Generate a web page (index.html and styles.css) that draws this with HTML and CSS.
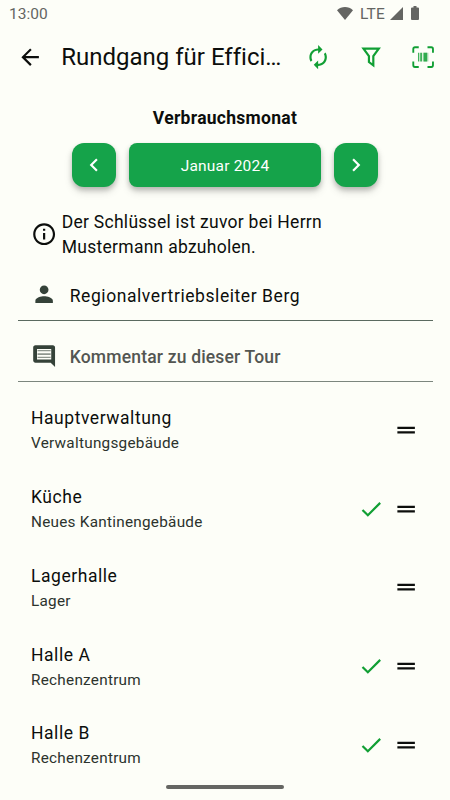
FILE: index.html
```html
<!DOCTYPE html>
<html lang="de">
  <head>
    <meta charset="UTF-8" />
    <meta name="viewport" content="width=device-width, initial-scale=1.0" />
    <title>Rundgang</title>
    <link rel="stylesheet" href="styles.css">
  </head>
  <body>
    <div class="screen">
      <div class="statusbar">
        <span class="statusbar__time">13:00</span>
        <svg class="statusbar__wifi" viewBox="0 0 16 13"><path d="M8 13 0 3.2C4.500-1 11.500-1 16 3.200z" /></svg>
        <span class="statusbar__net">LTE</span>
        <svg class="statusbar__signal" viewBox="0 0 13 13"><path d="M13 0v13H0z" /></svg>
        <svg class="statusbar__battery" viewBox="0 0 8 14"><path d="M2.500 0h3v1.500H7a1 1 0 0 1 1 1V13a1 1 0 0 1-1 1H1a1 1 0 0 1-1-1V2.500a1 1 0 0 1 1-1h1.500z" /></svg>
      </div>

      <header class="appbar">
        <svg class="icon" viewBox="0 0 24 24"><path d="M20 11H7.830l5.590-5.590L12 4l-8 8 8 8 1.410-1.410L7.830 13H20z" /></svg>
        <h1 class="appbar__title">Rundgang für Effici…</h1>
        <div class="appbar__actions">
          <svg class="icon" viewBox="0 0 24 24"><path d="M12 6v3l4-4-4-4v3c-4.420 0-8 3.580-8 8 0 1.570.46 3.030 1.240 4.260L6.700 14.800A5.870 5.870 0 0 1 6 12c0-3.310 2.690-6 6-6zm6.760 1.740L17.300 9.200c.44.840.7 1.790.7 2.800 0 3.310-2.690 6-6 6v-3l-4 4 4 4v-3c4.420 0 8-3.580 8-8 0-1.570-.46-3.030-1.240-4.260z" /></svg>
          <svg class="icon" viewBox="0 0 24 24"><path d="M5 4.200h14L14 11v8.500L10 16.500V11z" fill="none" stroke="currentColor" stroke-width="2" /></svg>
          <svg class="icon" viewBox="0 0 24 24">
            <path d="M3 8V4.500A1.500 1.500 0 0 1 4.500 3H8M16 3h3.500A1.500 1.500 0 0 1 21 4.500V8M21 16v3.500a1.500 1.500 0 0 1-1.500 1.500H16M8 21H4.500A1.500 1.500 0 0 1 3 19.500V16" fill="none" stroke="currentColor" stroke-width="1.700" />
            <path d="M7.300 8h1.200v8H7.300zM9.300 8h1.700v8H9.300zM12.500 8h1.900v8h-1.900zM14.400 8h1.200v8h-1.200z" opacity=".8" />
            <path d="M11.600 8h5.200v8h-5.200z" opacity=".35" />
          </svg>
        </div>
      </header>

      <section class="month">
        <h2 class="month__label">Verbrauchsmonat</h2>
        <div class="month__controls">
          <button class="month__step" aria-label="Zurück"><svg viewBox="0 0 24 24"><path d="M15.410 7.410 14 6l-6 6 6 6 1.410-1.410L10.830 12z" /></svg></button>
          <button class="month__current">Januar 2024</button>
          <button class="month__step" aria-label="Weiter"><svg viewBox="0 0 24 24"><path d="M10 6 8.590 7.410 13.170 12l-4.580 4.590L10 18l6-6z" /></svg></button>
        </div>
      </section>

      <div class="info">
        <svg class="icon" viewBox="0 0 24 24"><path d="M11 7h2v2h-2zm0 4h2v6h-2zm1-9C6.480 2 2 6.480 2 12s4.480 10 10 10 10-4.480 10-10S17.520 2 12 2zm0 18c-4.410 0-8-3.590-8-8s3.590-8 8-8 8 3.590 8 8-3.590 8-8 8z" /></svg>
        <p class="info__text">Der Schlüssel ist zuvor bei Herrn Mustermann abzuholen.</p>
      </div>

      <div class="field field--person">
        <svg class="icon" viewBox="0 0 24 24"><path d="M12 12c2.210 0 4-1.790 4-4s-1.790-4-4-4-4 1.790-4 4 1.790 4 4 4zm0 2c-2.670 0-8 1.340-8 4v2h16v-2c0-2.660-5.330-4-8-4z" /></svg>
        <span>Regionalvertriebsleiter Berg</span>
      </div>
      <div class="field field--comment">
        <svg class="icon" viewBox="0 0 24 24"><path fill-rule="evenodd" d="M21.990 4c0-1.100-.89-2-1.990-2H4c-1.100 0-2 .9-2 2v12c0 1.100.9 2 2 2h14l4 4zM5.500 5.500h13v9.500h-13z" /><path d="M6 6.500h12v1H6zM6 9.300h12v1.700H6zM6 12.500h12v1.200H6z" opacity=".55" /></svg>
        <span>Kommentar zu dieser Tour</span>
      </div>

      <ul class="stops">
        <li class="stop">
          <div class="stop__text"><h3>Hauptverwaltung</h3><p>Verwaltungsgebäude</p></div>
          <svg class="icon" viewBox="0 0 24 24"><path d="M20 9H4v2h16zM4 15h16v-2H4z" /></svg>
        </li>
        <li class="stop">
          <div class="stop__text"><h3>Küche</h3><p>Neues Kantinengebäude</p></div>
          <svg class="icon stop__check" viewBox="0 0 24 24"><path d="M9 16.170 4.830 12l-1.420 1.410L9 19 21 7l-1.410-1.410z" /></svg>
          <svg class="icon" viewBox="0 0 24 24"><path d="M20 9H4v2h16zM4 15h16v-2H4z" /></svg>
        </li>
        <li class="stop">
          <div class="stop__text"><h3>Lagerhalle</h3><p>Lager</p></div>
          <svg class="icon" viewBox="0 0 24 24"><path d="M20 9H4v2h16zM4 15h16v-2H4z" /></svg>
        </li>
        <li class="stop">
          <div class="stop__text"><h3>Halle A</h3><p>Rechenzentrum</p></div>
          <svg class="icon stop__check" viewBox="0 0 24 24"><path d="M9 16.170 4.830 12l-1.420 1.410L9 19 21 7l-1.410-1.410z" /></svg>
          <svg class="icon" viewBox="0 0 24 24"><path d="M20 9H4v2h16zM4 15h16v-2H4z" /></svg>
        </li>
        <li class="stop">
          <div class="stop__text"><h3>Halle B</h3><p>Rechenzentrum</p></div>
          <svg class="icon stop__check" viewBox="0 0 24 24"><path d="M9 16.170 4.830 12l-1.420 1.410L9 19 21 7l-1.410-1.410z" /></svg>
          <svg class="icon" viewBox="0 0 24 24"><path d="M20 9H4v2h16zM4 15h16v-2H4z" /></svg>
        </li>
      </ul>

      <div class="homebar"></div>
    </div>
  </body>
</html>
```
FILE: styles.css
```css
* {
  padding: 0;
  margin: 0;
  box-sizing: border-box;
}

body {
  background-color: #fdfef8;
  color: #0c0e0c;
  font-family: Roboto, sans-serif;
}

.screen {
  width: 450px;
  height: 800px;
  margin: 0 auto;
  display: flex;
  flex-direction: column;
  position: relative;
  overflow: hidden;
}

svg {
  display: block;
  flex-shrink: 0;
  fill: currentColor;
}

.icon {
  width: 26.25px;
  height: 26.25px;
}

.statusbar {
  height: 26px;
  padding: 0 31px 0 9px;
  display: flex;
  align-items: center;
  color: #646562;
  font-size: 15.5px;
}

.statusbar__time {
  margin-right: auto;
  padding-top: 2px;
}

.statusbar__wifi {
  width: 16px;
  height: 13px;
}

.statusbar__net {
  margin: 1px 5px 0 7px;
  letter-spacing: 0.2px;
}

.statusbar__signal {
  width: 13px;
  height: 13px;
  margin-right: 8px;
}

.statusbar__battery {
  width: 8px;
  height: 14px;
}

.appbar {
  height: 61px;
  padding: 1px 13.5px 0 17px;
  display: flex;
  align-items: center;
}

.appbar__title {
  flex: 1;
  padding-left: 18px;
  font-size: 24px;
  line-height: 28px;
  font-weight: 400;
  font-variant-ligatures: none;
  white-space: nowrap;
}

.appbar__actions {
  display: flex;
  gap: 26.25px;
  color: #119f34;
}

.month {
  height: 119px;
  padding-top: 20px;
}

.month__label {
  font-size: 17.5px;
  line-height: 22px;
  font-weight: 700;
  text-align: center;
  letter-spacing: 0.28px;
}

.month__controls {
  margin-top: 14px;
  display: flex;
  justify-content: center;
  gap: 13px;
}

.month button {
  height: 44px;
  border: none;
  color: #fff;
  background-color: #15a34a;
  box-shadow: 0 3px 5px rgba(0, 0, 0, 0.2), 0 5px 8px rgba(0, 0, 0, 0.12);
  font-family: inherit;
  font-size: 15.5px;
}

.month .month__step {
  width: 44px;
  border-radius: 12px;
}

.month__step svg {
  width: 26px;
  height: 26px;
  margin: 0 auto;
}

.month .month__current {
  width: 192px;
  padding-top: 1px;
  border-radius: 8px;
  letter-spacing: 0.2px;
}

.info {
  height: 65px;
  padding: 4px 31px 0 30.5px;
  display: flex;
  align-items: flex-start;
}

.info .icon {
  margin-top: 11px;
}

.info__text {
  width: 290px;
  margin-left: 5px;
  font-size: 17.5px;
  line-height: 25px;
  letter-spacing: 0.27px;
}

.field {
  margin: 0 17.5px;
  padding-left: 13px;
  display: flex;
  align-items: center;
  gap: 13px;
  border-bottom: 1px solid #5b6a60;
  font-size: 17.5px;
  letter-spacing: 0.57px;
}

.field .icon {
  color: #354239;
}

.field--person {
  height: 50px;
}

.field--person .icon {
  margin-bottom: 2px;
}

.field--comment {
  height: 61px;
  padding-top: 12px;
  padding-bottom: 1px;
  color: #535652;
  border-color: #7c867e;
  font-weight: 500;
  letter-spacing: 0.18px;
}

.field--comment .icon {
  margin-bottom: 1px;
}

.stops {
  list-style: none;
  padding-top: 8.5px;
}

.stop {
  height: 78.75px;
  padding: 0 31px;
  display: flex;
  align-items: center;
}

.stop__text {
  flex: 1;
  padding-top: 1px;
}

.stop h3 {
  font-size: 17.5px;
  line-height: 26px;
  font-weight: 400;
  letter-spacing: 0.55px;
}

.stop p {
  color: #2c332d;
  font-size: 15.3px;
  line-height: 24px;
  letter-spacing: 0.26px;
}

.stop__check {
  margin-right: 9px;
  color: #119f34;
}

.homebar {
  position: absolute;
  bottom: 11px;
  left: 166px;
  width: 118px;
  height: 4px;
  border-radius: 2px;
  background-color: #656663;
}
```
